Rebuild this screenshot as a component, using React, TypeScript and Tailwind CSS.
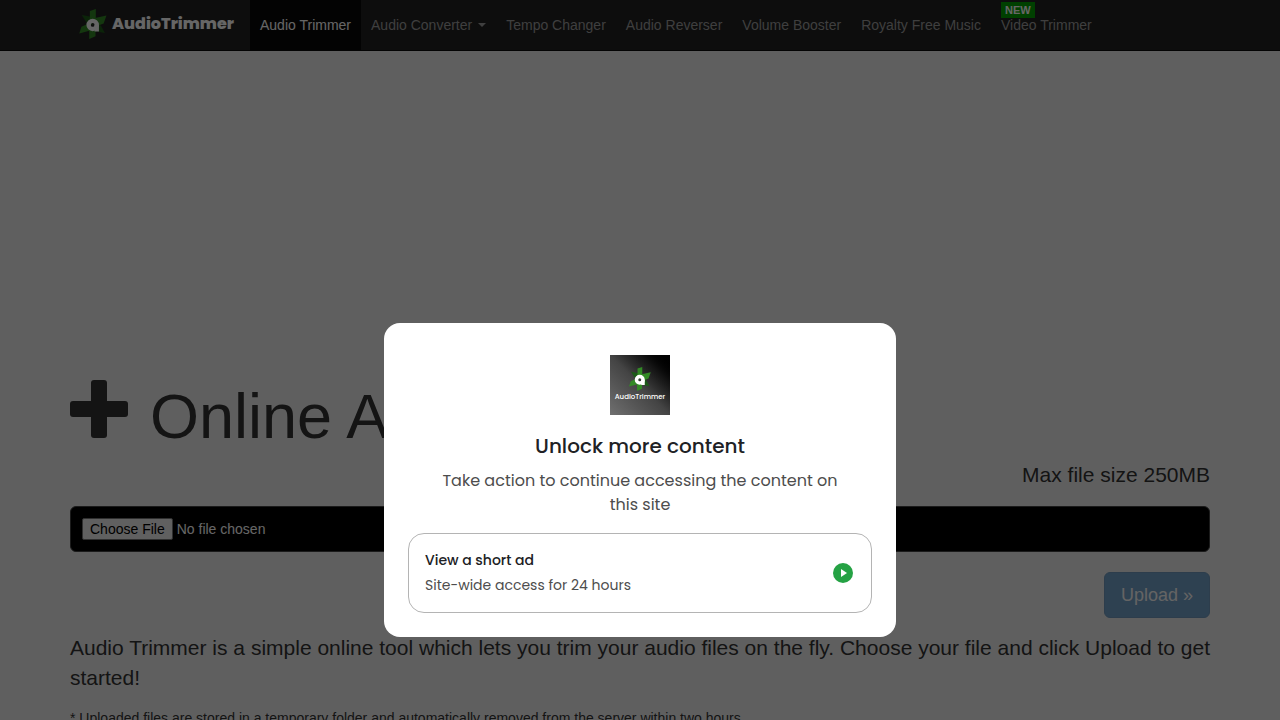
import React from 'react';

const NAV_LINKS = [
  { label: 'Audio Trimmer', active: true },
  { label: 'Audio Converter', dropdown: true },
  { label: 'Tempo Changer' },
  { label: 'Audio Reverser' },
  { label: 'Volume Booster' },
  { label: 'Royalty Free Music' },
  { label: 'Video Trimmer', isNew: true },
];

const LogoMark: React.FC<{ className?: string }> = ({ className }) => (
  <svg viewBox="10 9 90 96" className={className} aria-hidden="true">
    <g fill="#1c5a18">
      <path d="M19 28 L45 33 L54 60 L34 52 Z" />
      <path d="M62 58 L80 62 L93 86 L62 80 Z" />
    </g>
    <g fill="#338a26">
      <path d="M45 15 L64 9 L64 50 L45 50 Z" />
      <path d="M62 38 L98 30 L89 55 L66 64 Z" />
      <path d="M43 72 L63 70 L63 96 L43 105 Z" />
      <path d="M18 66 L44 54 L46 78 L11 87 Z" />
    </g>
    <circle cx="54" cy="60" r="13" fill="none" stroke="#fff" strokeWidth="14" />
    <rect x="60" y="60" width="14" height="21" fill="#fff" />
  </svg>
);

const Navbar: React.FC = () => (
  <nav className="border-b border-[#080808] bg-[#222222]">
    <div className="mx-auto flex max-w-[1140px] items-center">
      <a href="#" className="flex h-[50px] w-[180px] shrink-0 items-center gap-1 pb-[2px] pl-2 text-white">
        <LogoMark className="h-[30px] w-[30px] shrink-0" />
        <span className="font-['Poppins','Inter',sans-serif] text-[16px] leading-5 font-extrabold">AudioTrimmer</span>
      </a>
      <ul className="flex">
        {NAV_LINKS.map((link) => (
          <li key={link.label} className="relative">
            <a
              href="#"
              className={
                link.active
                  ? 'flex h-[50px] items-center bg-[#080808] px-[10px] whitespace-nowrap text-white'
                  : 'flex h-[50px] items-center px-[10px] whitespace-nowrap text-[#9d9d9d]'
              }
            >
              {link.label}
              {link.dropdown && (
                <span className="ml-[6px] border-x-4 border-t-4 border-x-transparent border-t-[#9d9d9d]" />
              )}
            </a>
            {link.isNew && (
              <span className="absolute top-[2px] left-[10px] bg-[#00a000] px-1 text-[11px] leading-4 font-bold text-white">
                NEW
              </span>
            )}
          </li>
        ))}
      </ul>
    </div>
  </nav>
);

const UnlockDialog: React.FC = () => (
  <div className="fixed inset-0 flex flex-col items-center justify-end bg-black/60 pb-[83px]">
    <div
      role="dialog"
      aria-labelledby="unlock-title"
      className="flex w-full max-w-lg flex-col items-center rounded-2xl bg-white px-6 pt-8 pb-6 font-['Poppins','Inter',sans-serif]"
    >
      <div className="flex size-[60px] flex-col items-center bg-linear-to-tr from-[#707070] via-[#444444] to-black pt-3">
        <LogoMark className="size-6" />
        <span className="text-[7px] leading-3 font-medium text-white">AudioTrimmer</span>
      </div>
      <h2 id="unlock-title" className="mt-4 text-[20px] leading-[30px] font-medium text-[#202124]">
        Unlock more content
      </h2>
      <p className="mt-2 px-8 text-center text-base leading-6 text-[#4d4d4d]">
        Take action to continue accessing the content on this site
      </p>
      <button
        type="button"
        className="mt-4 flex h-20 w-full items-center justify-between rounded-2xl border border-[#b4b4b4] pr-[18px] pl-4 text-left text-sm"
      >
        <span className="flex flex-col gap-[5px] pb-[2px]">
          <span className="font-medium text-[#202124]">View a short ad</span>
          <span className="text-[#4d4d4d]">Site-wide access for 24 hours</span>
        </span>
        <svg viewBox="0 0 20 20" className="size-5" aria-hidden="true">
          <circle cx="10" cy="10" r="10" fill="#25a244" />
          <path d="M8 6 L14 10 L8 14 Z" fill="#fff" />
        </svg>
      </button>
    </div>
  </div>
);

export default function App() {
  return (
    <div className="h-screen overflow-hidden bg-[#eeeeee] font-['Liberation_Sans',Arial,sans-serif] text-sm text-[#333333]">
      <Navbar />
      <main className="mx-auto max-w-[1140px] pt-[329px]">
        <h1 className="flex items-baseline gap-[22px] text-[63px] leading-[70px]">
          <svg viewBox="0 0 58 58" className="size-[58px] shrink-0" fill="#333333" aria-hidden="true">
            <rect x="21" y="0" width="16" height="58" rx="3" />
            <rect x="0" y="21" width="58" height="16" rx="3" />
          </svg>
          Online Audio Cutter
        </h1>
        <form>
          <label htmlFor="audio-file" className="mt-[9px] block text-right text-[21px] leading-[30px]">
            Max file size 250MB
          </label>
          <input
            id="audio-file"
            type="file"
            className="mt-4 block h-[46px] w-full rounded-md border border-[#444444] bg-black px-[11px] py-[11px] text-sm text-white file:rounded-[2px] file:border file:border-solid file:border-[#767676] file:bg-[#efefef] file:px-[7px] file:text-black"
          />
          <div className="mt-5 flex justify-end">
            <button
              type="button"
              className="h-[46px] rounded-md border border-[#2e6da4] bg-[#337ab7] px-4 text-lg text-white opacity-65"
            >
              Upload »
            </button>
          </div>
        </form>
        <p className="mt-[15px] text-[21px] leading-[30px]">
          Audio Trimmer is a simple online tool which lets you trim your audio files on the fly. Choose your file and
          click Upload to get started!
        </p>
        <p className="mt-[15px]">
          * Uploaded files are stored in a temporary folder and automatically removed from the server within two hours.
        </p>
      </main>
      <UnlockDialog />
    </div>
  );
}
